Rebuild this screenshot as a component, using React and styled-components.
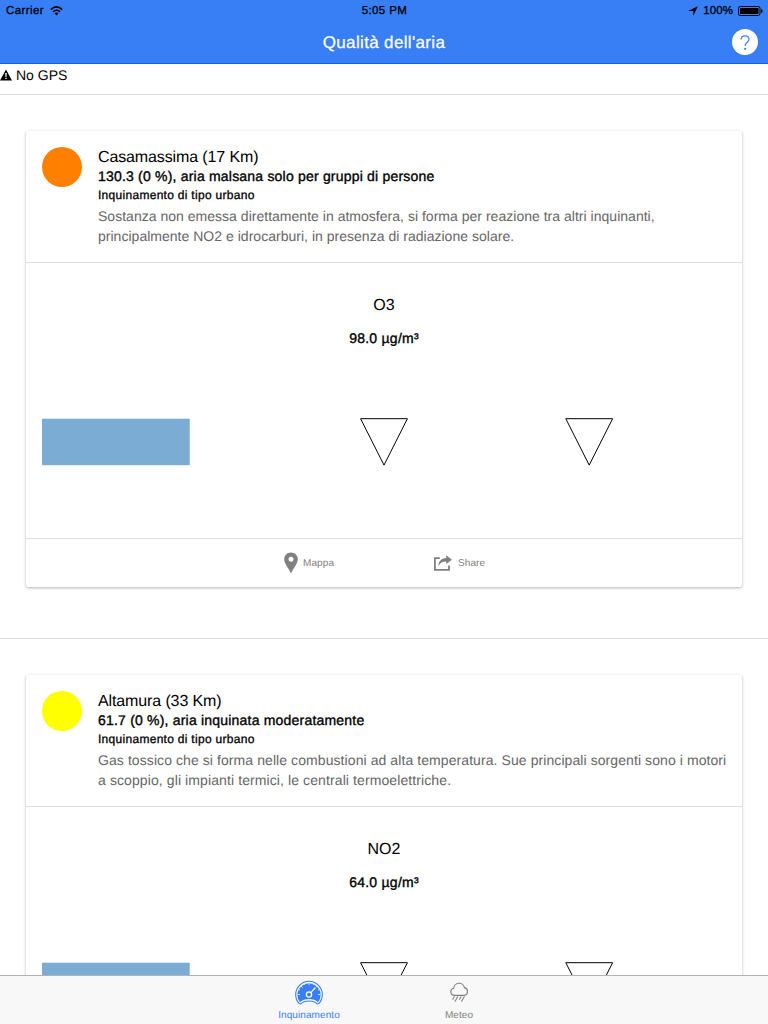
import React from "react";
import styled, { createGlobalStyle } from "styled-components";

const Global = createGlobalStyle`
  * { box-sizing: border-box; }
  body { margin: 0; background: #fff; color: #000; overflow: hidden;
    font-family: "Liberation Sans", Arial, sans-serif; text-rendering: geometricPrecision; }
  h1, h2, h3, h4, p { margin: 0; font-weight: 400; }
`;

const Screen = styled.div`
  width: 768px; height: 1024px; display: flex; flex-direction: column; overflow: hidden;
`;
const Header = styled.header`
  flex: none; height: 64px; background: #387ef5; border-bottom: 1px solid #0c63ee;
`;
const StatusBar = styled.div`
  height: 20px; display: grid; grid-template-columns: 1fr auto 1fr; align-items: center;
  padding: 2px 5px 0 6px; font-size: 11.5px; line-height: 18px;
  -webkit-text-stroke: 0.3px #000;
`;
const StatusText = styled.span`
  letter-spacing: ${(p) => p.$spacing}px;
`;
const StatusSide = styled.div`
  display: flex; align-items: center; gap: ${(p) => p.$gap}px;
  justify-content: ${(p) => (p.$end ? "flex-end" : "flex-start")};
`;
const TitleBar = styled.div`
  height: 43px; display: grid; grid-template-columns: 1fr auto 1fr; align-items: center; padding: 0 10px;
`;
const Title = styled.h1`
  grid-column: 2; color: #fff; font-size: 17px; line-height: 43px; letter-spacing: 0.35px;
  padding-top: 1px; -webkit-text-stroke: 0.25px #fff;
`;
const HelpButton = styled.button`
  justify-self: end; width: 26px; height: 26px; border: 0; border-radius: 50%; padding: 1px 0 0;
  background: #fff; display: grid; place-items: center;
`;
const Content = styled.main`
  flex: 1; min-height: 0; overflow: hidden; display: flex; flex-direction: column;
`;
const Notice = styled.div`
  flex: none; height: 31px; border-bottom: 1px solid #ddd; display: flex; gap: 4px; padding-top: 1px;
  font-size: 14px; line-height: 21px; svg { margin-top: 4px; }
`;
const Item = styled.section`
  flex: none; height: 544px; border-bottom: 1px solid #ddd; padding: 36px 26px 0;
`;
const Card = styled.article`
  height: 456px; border-radius: 2px; background: #fff; box-shadow: 0 1px 3px rgba(0, 0, 0, 0.3);
  display: flex; flex-direction: column;
`;
const CardHead = styled.div`
  height: 132px; flex: none; display: flex; gap: 16px; padding: 16px 0 0 16px; border-bottom: 1px solid #ddd;
`;
const Dot = styled.div`
  flex: none; width: 40px; height: 40px; border-radius: 50%; background: ${(p) => p.$color};
`;
const Place = styled.h2`
  padding-top: 1px; font-size: 16px; line-height: 19px; letter-spacing: -0.12px;
`;
const Quality = styled.h3`
  font-size: 14px; line-height: 19px; letter-spacing: 0.2px; -webkit-text-stroke: 0.35px #000;
`;
const Kind = styled.h4`
  font-size: 12px; line-height: 18px; letter-spacing: 0.29px; -webkit-text-stroke: 0.3px #000;
`;
const Description = styled.p`
  margin-top: 2px; font-size: 14px; line-height: 20px; color: #666; white-space: nowrap;
`;
const Line = styled.span`
  display: block; letter-spacing: ${(p) => p.$spacing}px;
`;
const CardBody = styled.div`
  height: 275px; flex: none; padding: 33px 16px 0; text-align: center;
`;
const Gas = styled.h2`
  font-size: 16px; line-height: 20px;
`;
const Amount = styled.p`
  margin-top: 13px; font-size: 14px; line-height: 19px; letter-spacing: 0.25px; -webkit-text-stroke: 0.35px #000;
`;
const Chart = styled.svg`
  display: block; margin-top: 68px;
`;
const CardFoot = styled.div`
  flex: 1; border-top: 1px solid #ddd; display: flex; justify-content: center; gap: 100px; align-items: center;
`;
const Action = styled.a`
  width: 50px; white-space: nowrap; letter-spacing: 0.1px;
  display: flex; align-items: center; gap: ${(p) => p.$gap}px; color: #808080; font-size: 10px;
  svg { flex: none; }
`;
const ActionLabel = styled.span`
  padding-top: 2px; line-height: 12px;
`;
const Tabs = styled.nav`
  flex: none; height: 49px; background: #f8f8f8; border-top: 1px solid #b2b2b2;
  display: flex; justify-content: center; align-items: flex-start;
`;
const Tab = styled.a`
  width: 150px; display: flex; flex-direction: column; align-items: center;
  color: ${(p) => (p.$active ? "#387ef5" : "#808080")};
  svg { height: 32px; margin-bottom: 2px; }
`;
const TabLabel = styled.span`
  font-size: 10px; line-height: 12px; letter-spacing: 0.08px;
`;

const Wifi = () => (
  <svg width="13" height="10" viewBox="0 0 13 10" fill="none" stroke="#000" strokeWidth="1.5">
    <path d="M.8 3.6Q6.5-1.8 12.2 3.6M3 5.8Q6.5 2.6 10 5.8" />
    <path d="M4.5 7.3Q6.5 5.6 8.5 7.3L6.5 9.4Z" fill="#000" stroke="none" />
  </svg>
);
const Arrow = () => (
  <svg width="10" height="10" viewBox="0 0 10 10"><path d="M9.8.3 5.4 9.7V4.9H.2Z" /></svg>
);
const Battery = () => (
  <svg width="25" height="10" viewBox="0 0 25 10">
    <rect x=".5" y=".5" width="21.5" height="9" rx="1.8" fill="none" stroke="#000" />
    <rect x="2" y="2" width="18.5" height="6" rx=".6" />
    <path d="M23 3Q24.7 3.4 24.7 5T23 7Z" />
  </svg>
);
const Question = () => (
  <svg width="12" height="18" viewBox="0 0 12 18" fill="none" stroke="#387ef5" strokeWidth="1.2">
    <path d="M2 5.6C2 3 3.6 1.8 6 1.8S10 3.2 10 5.2C10 8.4 6.2 8.2 6.2 12" />
    <circle cx="6.2" cy="14.8" r="1.1" fill="#387ef5" stroke="none" />
  </svg>
);
const Warning = () => (
  <svg width="12" height="12" viewBox="0 0 12 12">
    <path d="M6 .4 12 11.4H0Z" />
    <path d="M5.2 4H6.8L6.5 8H5.5ZM5.3 8.8H6.7V10.1H5.3Z" fill="#fff" />
  </svg>
);
const Pin = () => (
  <svg width="14" height="22" viewBox="0 0 14 22" fill="#808080">
    <path fillRule="evenodd" d="M7 .5C3.2.5.2 3.4.2 7.1.2 11.8 4.6 16.3 7 21.4 9.4 16.3 13.8 11.8 13.8 7.1 13.8 3.4 10.8.5 7 .5ZM7 4.7A2.5 2.5 0 1 1 7 9.7 2.5 2.5 0 0 1 7 4.7Z" />
  </svg>
);
const Share = () => (
  <svg width="18" height="16" viewBox="0 0 18 16" fill="#808080">
    <path d="M5.8 3.2H.9V14.9H15V10.5" fill="none" stroke="#808080" strokeWidth="1.8" />
    <path d="M12.2.3 18 4.7 12.2 9V6.6C8.4 6.6 6.2 8 4.2 11.2 4.5 6.5 7.3 3.2 12.2 3Z" />
  </svg>
);
const Gauge = () => (
  <svg width="28" viewBox="0 0 28 32">
    <path d="M4.2 27.6A13.3 13.3 0 1 1 23.8 27.6L22.2 27.9C18.5 24 9.5 24 5.8 27.9Z" fill="none" stroke="#387ef5" strokeWidth="1.1" />
    <path d="M5 26.2A11.6 11.6 0 1 1 23 26.2C19 22 9 22 5 26.2Z" fill="#387ef5" />
    <g stroke="#f8f8f8" fill="none">
      <circle cx="14" cy="18.6" r="2.6" strokeWidth="1.3" />
      <path d="M15.8 16.6 20.5 11.5" strokeWidth="1.2" />
      <path d="M14 6.5V9M6 10 7.8 11.8M2.5 18.5H5M25.5 18.5H23M22 10 21 11M9.2 7.5 9.8 9M18.8 7.5 18.2 9M3.7 13.5 5 14M24.3 13.5 23 14" strokeWidth=".8" />
    </g>
  </svg>
);
const Rain = () => (
  <svg width="20" viewBox="0 0 20 32" fill="none" stroke="#808080" strokeWidth="1.1" strokeLinecap="round">
    <path d="M5 19.4A3.6 3.6 0 0 1 4.7 12.3 5.4 5.4 0 0 1 15.4 11.6 4 4 0 0 1 15.4 19.4Z" />
    <path d="M5.2 20.8 3.8 23.2M8.6 20.8 6.1 25.2M12 20.8 10.5 23.2M15.2 20.8 12.6 25.2" />
  </svg>
);

const stations = [
  { color: "#ff8000", place: "Casamassima (17 Km)", quality: "130.3 (0 %), aria malsana solo per gruppi di persone", gas: "O3", amount: "98.0 µg/m³",
    lines: [["Sostanza non emessa direttamente in atmosfera, si forma per reazione tra altri inquinanti,", 0.02], ["principalmente NO2 e idrocarburi, in presenza di radiazione solare.", 0.02]] },
  { color: "#ffff00", place: "Altamura (33 Km)", quality: "61.7 (0 %), aria inquinata moderatamente", gas: "NO2", amount: "64.0 µg/m³",
    lines: [["Gas tossico che si forma nelle combustioni ad alta temperatura. Sue principali sorgenti sono i motori", 0.08], ["a scoppio, gli impianti termici, le centrali termoelettriche.", 0.1]] },
];

const Station = ({ data }) => (
  <Item>
    <Card>
      <CardHead>
        <Dot $color={data.color} />
        <div>
          <Place>{data.place}</Place>
          <Quality>{data.quality}</Quality>
          <Kind>Inquinamento di tipo urbano</Kind>
          <Description>
            {data.lines.map(([text, spacing]) => <Line key={text} $spacing={spacing}>{text}</Line>)}
          </Description>
        </div>
      </CardHead>
      <CardBody>
        <Gas>{data.gas}</Gas>
        <Amount>{data.amount}</Amount>
        <Chart width="684" height="52" viewBox="0 0 684 52">
          <rect x="0" y="2.7" width="147.7" height="46.5" fill="#7bacd3" />
          <path d="M318.6 2.7H365.4L342 49.1ZM523.8 2.7H570.6L547.2 49.1Z" fill="none" stroke="#000" />
        </Chart>
      </CardBody>
      <CardFoot>
        <Action $gap={5}><Pin /><ActionLabel>Mappa</ActionLabel></Action>
        <Action $gap={6}><Share /><ActionLabel>Share</ActionLabel></Action>
      </CardFoot>
    </Card>
  </Item>
);

export default function App() {
  return (
    <Screen>
      <Global />
      <Header>
        <StatusBar>
          <StatusSide $gap={6}><StatusText $spacing={0.4}>Carrier</StatusText><Wifi /></StatusSide>
          <StatusText $spacing={0.4}>5:05 PM</StatusText>
          <StatusSide $gap={5} $end><Arrow /><StatusText $spacing={0.1}>100%</StatusText><Battery /></StatusSide>
        </StatusBar>
        <TitleBar>
          <Title>Qualità dell'aria</Title>
          <HelpButton aria-label="?"><Question /></HelpButton>
        </TitleBar>
      </Header>
      <Content>
        <Notice><Warning />No GPS</Notice>
        {stations.map((s) => <Station key={s.place} data={s} />)}
      </Content>
      <Tabs>
        <Tab $active><Gauge /><TabLabel>Inquinamento</TabLabel></Tab>
        <Tab><Rain /><TabLabel>Meteo</TabLabel></Tab>
      </Tabs>
    </Screen>
  );
}
